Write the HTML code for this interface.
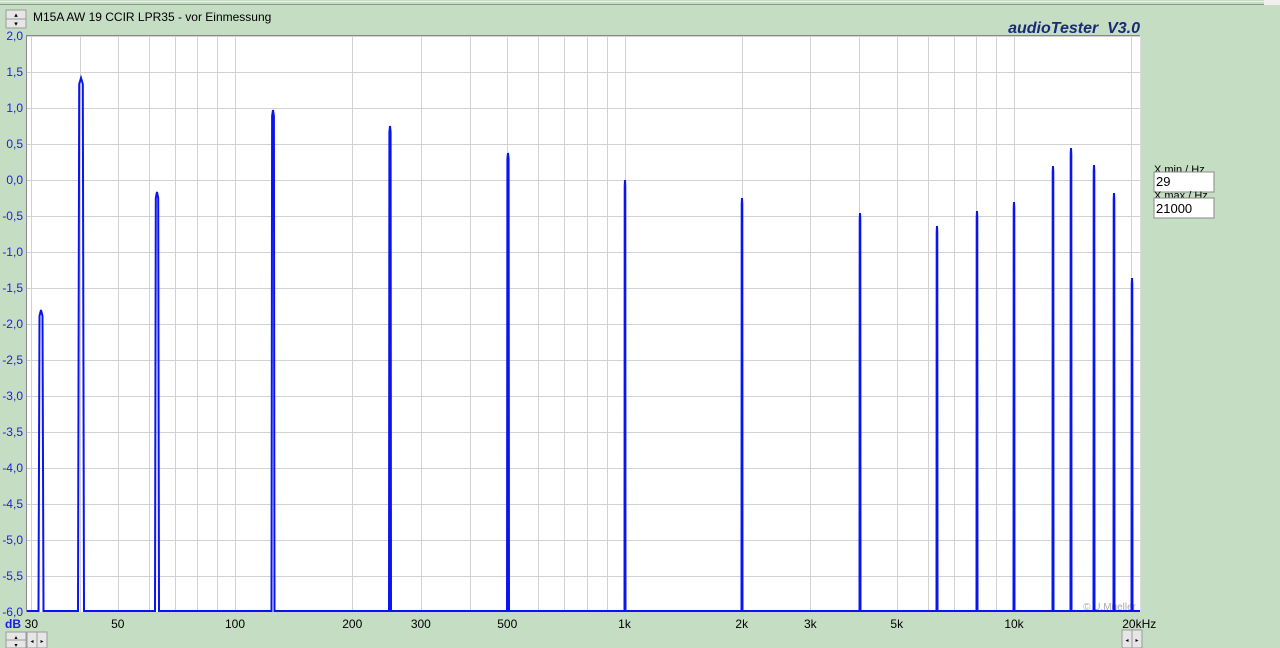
<!DOCTYPE html>
<html><head><meta charset="utf-8"><style>
html,body{margin:0;padding:0;background:#c4ddc3;width:1280px;height:648px;overflow:hidden;font-family:"Liberation Sans",sans-serif}
</style></head><body>
<svg id="s" width="1280" height="648" xmlns="http://www.w3.org/2000/svg" font-family="Liberation Sans, sans-serif">
<rect x="0" y="0" width="1280" height="648" fill="#c4ddc3"/>
<line x1="0" y1="4.5" x2="1280" y2="4.5" stroke="#8a9a8a"/>
<line x1="0" y1="1.5" x2="1280" y2="1.5" stroke="#e8f2e8"/>
<rect x="1264" y="0" width="16" height="5" fill="#f0f0f0"/>
<rect x="6" y="10" width="20" height="18" fill="#e6e6e6" stroke="#9a9a9a"/>
<line x1="6" y1="19" x2="26" y2="19" stroke="#9a9a9a"/>
<text x="16" y="17" font-size="7" text-anchor="middle" fill="#000">▴</text>
<text x="16" y="26" font-size="7" text-anchor="middle" fill="#000">▾</text>
<text x="33" y="21" font-size="12" fill="#000">M15A AW 19 CCIR LPR35 - vor Einmessung</text>
<text x="1140" y="33" font-size="16" font-weight="bold" font-style="italic" fill="#1a2a78" text-anchor="end" xml:space="preserve">audioTester  V3.0</text>
<rect x="26" y="35" width="1114" height="577" fill="#fff"/>
<g id="grid" stroke="#d2d2d2" stroke-width="1"></g>
<g id="lab" font-size="12"></g>
<line x1="26.5" y1="35" x2="26.5" y2="612" stroke="#888"/>
<line x1="26" y1="35.5" x2="1140" y2="35.5" stroke="#888"/>
<line x1="1140.5" y1="35" x2="1140.5" y2="612" stroke="#ddd"/>
<text x="1136" y="610" font-size="10" fill="#aaa" text-anchor="end">© U.Mueller</text>
<g fill="none" stroke="#0a14f0" stroke-width="2" id="peaks"></g>
<text x="1154" y="173" font-size="11" fill="#000">X min / Hz</text>
<rect x="1154" y="172" width="60" height="20" fill="#fff" stroke="#8a8a8a"/>
<text x="1156" y="186" font-size="13" fill="#000">29</text>
<text x="1154" y="199" font-size="11" fill="#000">X max / Hz</text>
<rect x="1154" y="198" width="60" height="20" fill="#fff" stroke="#8a8a8a"/>
<text x="1156" y="213" font-size="13" fill="#000">21000</text>
<text x="5" y="628" font-size="12" font-weight="bold" fill="#1a1aee">dB</text>
<rect x="6" y="632" width="20" height="16" fill="#e6e6e6" stroke="#9a9a9a"/>
<line x1="6" y1="640" x2="26" y2="640" stroke="#9a9a9a"/>
<text x="16" y="639" font-size="6" text-anchor="middle">▴</text>
<text x="16" y="647" font-size="6" text-anchor="middle">▾</text>
<rect x="27" y="632" width="10" height="16" fill="#e6e6e6" stroke="#9a9a9a"/>
<rect x="37" y="632" width="10" height="16" fill="#e6e6e6" stroke="#9a9a9a"/>
<text x="32" y="643" font-size="6" text-anchor="middle">◂</text>
<text x="42" y="643" font-size="6" text-anchor="middle">▸</text>
<rect x="1122" y="630" width="10" height="18" fill="#e6e6e6" stroke="#9a9a9a"/>
<rect x="1132" y="630" width="10" height="18" fill="#e6e6e6" stroke="#9a9a9a"/>
<text x="1127" y="642" font-size="6" text-anchor="middle">◂</text>
<text x="1137" y="642" font-size="6" text-anchor="middle">▸</text>
</svg>
<script>
var NS="http://www.w3.org/2000/svg";
function X(f){return 235+389.5*Math.log10(f/100);}
function Y(d){return 36+(2-d)*72;}
function el(p,t,a,txt){var e=document.createElementNS(NS,t);for(var k in a)e.setAttribute(k,a[k]);if(txt)e.textContent=txt;document.getElementById(p).appendChild(e);}
var fs=[30,40,50,60,70,80,90,100,200,300,400,500,600,700,800,900,1000,2000,3000,4000,5000,6000,7000,8000,9000,10000,20000];
fs.forEach(function(f){var x=Math.round(X(f))+0.5;el("grid","line",{x1:x,y1:36,x2:x,y2:612});});
for(var d=2;d>=-6;d-=0.5){var y=Math.round(Y(d))+0.5;el("grid","line",{x1:26,y1:y,x2:1140,y2:y});
 el("lab","text",{x:23,y:Y(d)+4,"text-anchor":"end",fill:"#2020e0"},d.toFixed(1).replace(".",","));}
var xl=[[30,"30"],[50,"50"],[100,"100"],[200,"200"],[300,"300"],[500,"500"],[1000,"1k"],[2000,"2k"],[3000,"3k"],[5000,"5k"],[10000,"10k"],[20000,"20kHz"]];
xl.forEach(function(a){el("lab","text",{x:X(a[0])+(a[1]=="20kHz"?8:0),y:628,"text-anchor":"middle",fill:"#000"},a[1]);});
var B=611;
var pk=[[41,310,2.5],[81,78,3],[157,192,2],[273,110,1.5],[390,126,1],[508,153,1],[625,180,0.5],[742,198,0.5],[860,213,0.5],[937,226,0.5],[977,211,0.5],[1014,202,0.5],[1053,166,0.5],[1071,148,0.5],[1094,165,0.5],[1114,193,0.5],[1132,278,0.5]];
var pts=[[27,B]];
pk.forEach(function(p){var x=p[0],t=p[1],w=p[2];pts.push([x-w,B],[x-w*0.6,t+6],[x,t],[x+w*0.6,t+6],[x+w,B]);});
pts.push([1140,B]);
el("peaks","polyline",{points:pts.map(function(p){return p.join(",");}).join(" ")});
</script>
</body></html>
